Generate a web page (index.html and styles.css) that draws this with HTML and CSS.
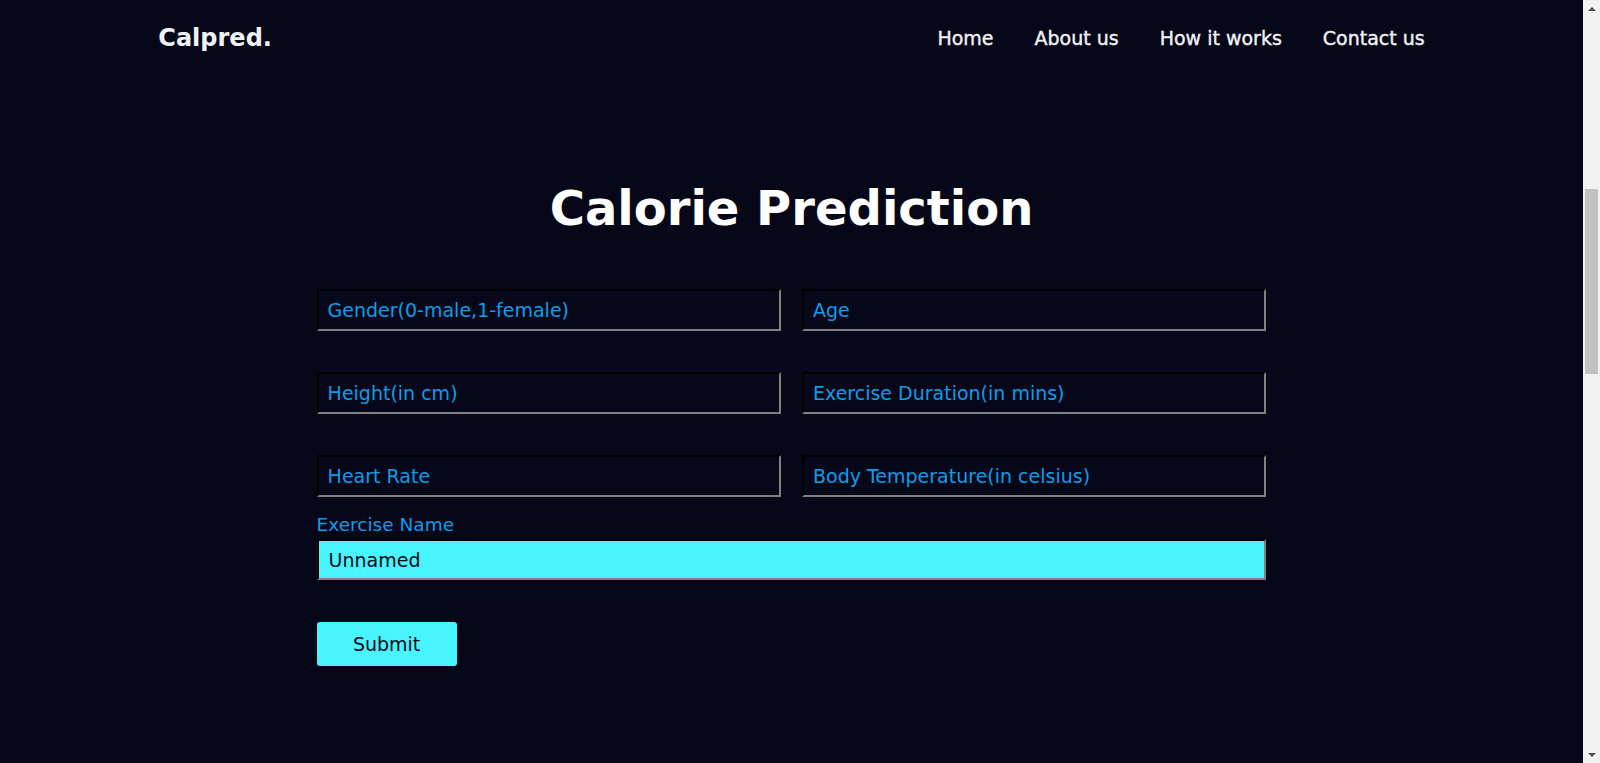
FILE: index.html
```html
<!DOCTYPE html>
<html lang="en">
<head>
<meta charset="utf-8">
<title>Calpred.</title>
<link rel="stylesheet" href="styles.css">
</head>
<body>
<header class="navbar">
  <div class="container nav-inner">
    <a class="logo" href="#home">Calpred.</a>
    <nav class="nav-links">
      <a href="#home">Home</a>
      <a href="#about">About us</a>
      <a href="#how">How it works</a>
      <a href="#contact">Contact us</a>
    </nav>
  </div>
</header>
<main class="section-predict" id="predict">
  <h1 class="title">Calorie Prediction</h1>
  <form class="predict-form" onsubmit="return false;">
    <div class="grid">
      <input class="field" type="text" placeholder="Gender(0-male,1-female)">
      <input class="field" type="text" placeholder="Age">
      <input class="field" type="text" placeholder="Height(in cm)">
      <input class="field" type="text" placeholder="Exercise Duration(in mins)">
      <input class="field" type="text" placeholder="Heart Rate">
      <input class="field" type="text" placeholder="Body Temperature(in celsius)">
    </div>
    <label class="label" for="ex">Exercise Name</label>
    <input id="ex" class="field field-name" type="text" value="Unnamed">
    <button class="submit" type="submit">Submit</button>
  </form>
</main>
<div class="scrollbar" aria-hidden="true">
  <span class="sb-arrow sb-up"></span>
  <div class="sb-track"><span class="sb-thumb"></span></div>
  <span class="sb-arrow sb-down"></span>
</div>
</body>
</html>
```

FILE: styles.css
```css
* { box-sizing: border-box; }
html, body {
  margin: 0;
  padding: 0;
  background: #060719;
  font-family: "DejaVu Sans", "Open Sans", sans-serif;
  color: #ffffff;
}
body {
  margin-right: 17px;
  height: 763px;
  overflow: hidden;
}
.container {
  width: 80%;
  margin: 0 auto;
}
.navbar {
  height: 76px;
  background: #060719;
}
.nav-inner {
  height: 100%;
  display: flex;
  align-items: center;
  justify-content: space-between;
}
.logo {
  color: #f1f1f4;
  text-decoration: none;
  font-size: 24px;
  font-weight: 700;
}
.nav-links {
  display: flex;
  gap: 41px;
}
.nav-links a {
  color: #f1f1f4;
  text-decoration: none;
  font-size: 19px;
  font-weight: 400;
  -webkit-text-stroke: 0.4px #f1f1f4;
}
.section-predict {
  padding-top: 102px;
}
.title {
  margin: 0 0 51px;
  text-align: center;
  font-size: 48px;
  line-height: 60px;
  font-weight: 700;
  color: #ffffff;
}
.predict-form {
  width: 60%;
  margin: 0 auto;
  display: flex;
  flex-direction: column;
  align-items: flex-start;
}
.grid {
  width: 100%;
  display: grid;
  grid-template-columns: 1fr 1fr;
  column-gap: 21px;
  row-gap: 41px;
}
.field {
  width: 100%;
  height: 42px;
  padding: 0 9px;
  background: transparent;
  border: 2px inset #767676;
  border-top-color: #2b2b2f;
  border-left-color: #2b2b2f;
  border-right-color: #808080;
  border-bottom-color: #808080;
  font-family: inherit;
  font-size: 19px;
  color: #0f9de8;
  outline: none;
}
.field::placeholder { color: #0f9de8; opacity: 1; }
.label {
  margin-top: 13px;
  font-size: 18.5px;
  line-height: 29px;
  color: #0f9de8;
}
.field-name {
  height: 41px;
  background: #48f4fd;
  color: #0b0b14;
  padding-left: 10px;
}
.submit {
  margin-top: 42px;
  width: 140px;
  height: 44px;
  border: none;
  border-radius: 3px;
  background: #48f4fd;
  color: #0b0b14;
  font-family: inherit;
  font-size: 19px;
  cursor: pointer;
}

/* window scrollbar, drawn over the right edge */
.scrollbar {
  position: fixed;
  top: 0;
  right: 0;
  width: 17px;
  height: 763px;
  background: #f1f1f1;
  display: flex;
  flex-direction: column;
  align-items: center;
}
.sb-arrow {
  flex: 0 0 17px;
  width: 17px;
  display: flex;
  align-items: center;
  justify-content: center;
}
.sb-arrow::before {
  content: "";
  width: 0;
  height: 0;
  border-left: 4px solid transparent;
  border-right: 4px solid transparent;
}
.sb-up::before { border-bottom: 4px solid #505050; }
.sb-down::before { border-top: 4px solid #505050; }
.sb-track {
  flex: 1;
  width: 100%;
  padding: 172px 2px 0;
}
.sb-thumb {
  display: block;
  width: 100%;
  height: 185px;
  background: #c1c1c1;
}
```
